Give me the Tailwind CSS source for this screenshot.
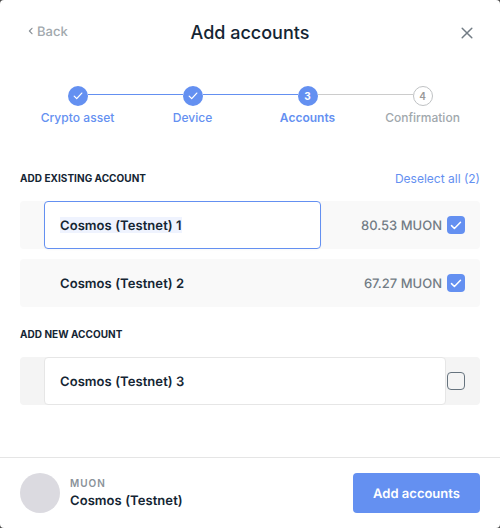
<!DOCTYPE html>
<html lang="en">
<head>
<meta charset="utf-8">
<title>Add accounts</title>
<script src="https://cdn.jsdelivr.net/npm/@tailwindcss/browser@4"></script>
</head>
<body class="bg-[#4a4a4a] font-['Inter',sans-serif] text-[#142533]">
<main class="flex h-[528px] w-[500px] flex-col overflow-hidden rounded-[4px] bg-white">
  <header class="grid h-[66px] grid-cols-[100px_1fr_100px] items-center">
    <button class="ml-[28px] flex items-center gap-[4px] text-[13px] leading-[16px] font-medium text-[#a1a8ad] -mt-[2px] [text-rendering:geometricPrecision]">
      <svg class="-mt-[2px] h-[8px] w-[5px]" viewBox="0 0 5 8" fill="none" stroke="#8a9299" stroke-width="1.2" stroke-linecap="round" stroke-linejoin="round"><path d="M4 1.3 1.4 4 4 6.7"/></svg>
      <span>Back</span>
    </button>
    <h1 class="text-center text-[18px] leading-[22px] font-medium">Add accounts</h1>
    <button class="mr-[27px] justify-self-end" aria-label="Close">
      <svg class="h-[12px] w-[12px]" viewBox="0 0 12 12" stroke="#727c85" stroke-width="1.5" stroke-linecap="round"><path d="M1.2 1.2 10.8 10.8M10.8 1.2 1.2 10.8"/></svg>
    </button>
  </header>

  <nav class="mx-[20px] mt-[20px] grid grid-cols-4 text-[12px] leading-[15px] font-medium text-[#6490f1]">
    <div class="flex flex-col items-center gap-[4px]">
      <div class="flex w-full"><i class="mt-[9px] h-px flex-1"></i><span class="flex size-[20px] items-center justify-center rounded-full bg-[#6490f1]"><svg class="-mt-px h-[8px] w-[10px]" viewBox="0 0 10 8" fill="none" stroke="white" stroke-width="1.3" stroke-linecap="round" stroke-linejoin="round"><path d="M1.2 4.1 3.7 6.6 8.8 1.1"/></svg></span><i class="mt-[8px] h-px flex-1 bg-[#6490f1]"></i></div>
      <span class="tracking-[0.04px]">Crypto asset</span>
    </div>
    <div class="flex flex-col items-center gap-[4px]">
      <div class="flex w-full"><i class="mt-[8px] h-px flex-1 bg-[#6490f1]"></i><span class="flex size-[20px] items-center justify-center rounded-full bg-[#6490f1]"><svg class="-mt-px h-[8px] w-[10px]" viewBox="0 0 10 8" fill="none" stroke="white" stroke-width="1.3" stroke-linecap="round" stroke-linejoin="round"><path d="M1.2 4.1 3.7 6.6 8.8 1.1"/></svg></span><i class="mt-[8px] h-px flex-1 bg-[#6490f1]"></i></div>
      <span>Device</span>
    </div>
    <div class="flex flex-col items-center gap-[4px]">
      <div class="flex w-full"><i class="mt-[8px] h-px flex-1 bg-[#6490f1]"></i><span class="flex size-[20px] items-center justify-center rounded-full bg-[#6490f1] text-[10px] font-bold text-white">3</span><i class="mt-[8px] h-px flex-1 bg-[#cccccc]"></i></div>
      <span class="font-semibold">Accounts</span>
    </div>
    <div class="flex flex-col items-center gap-[4px] text-[#a1a8ad]">
      <div class="flex w-full"><i class="mt-[8px] h-px flex-1 bg-[#cccccc]"></i><span class="flex size-[20px] items-center justify-center rounded-full border border-[#bfc2c4] text-[10px] font-semibold text-[#999999]">4</span><i class="flex-1"></i></div>
      <span>Confirmation</span>
    </div>
  </nav>

  <section class="mx-[20px] mt-[46px]">
    <div class="flex h-[15px] items-start justify-between">
      <h2 class="text-[10px] leading-[14px] font-bold tracking-[0.04px]">ADD EXISTING ACCOUNT</h2>
      <button class="text-[12px] leading-[15px] text-[#6490f1]">Deselect all (2)</button>
    </div>
    <div class="mt-[15px] flex h-[48px] items-center rounded-[4px] bg-[#f9f9f9] pr-[15px] pl-[24px] text-[13px] leading-[16px] [text-rendering:geometricPrecision]">
      <div class="flex h-[48px] w-[277px] items-center rounded-[4px] border border-[#6490f1] bg-white pl-[15px] font-semibold shadow-[0_1px_2px_rgba(0,0,0,0.03)]"><span class="h-[16px] bg-[#eff3fe] leading-[18px] tracking-[0.07px]">Cosmos (Testnet) 1</span></div>
      <span class="ml-auto pt-[2px] font-medium text-[#727c85]">80.53 MUON</span>
      <span class="ml-[5px] flex size-[18px] items-center justify-center rounded-[4px] bg-[#6490f1]"><svg class="h-[9px] w-[12px]" viewBox="0 0 12 9" fill="none" stroke="white" stroke-width="1.5" stroke-linecap="round" stroke-linejoin="round"><path d="M1.5 4.6 4.4 7.5 10.5 1.2"/></svg></span>
    </div>
    <div class="mt-[10px] flex h-[48px] items-center rounded-[4px] bg-[#f9f9f9] pr-[15px] pl-[40px] text-[13px] leading-[16px] [text-rendering:geometricPrecision]">
      <span class="pt-[2px] font-semibold tracking-[0.07px]">Cosmos (Testnet) 2</span>
      <span class="ml-auto pt-[2px] font-medium text-[#727c85]">67.27 MUON</span>
      <span class="ml-[5px] flex size-[18px] items-center justify-center rounded-[4px] bg-[#6490f1]"><svg class="h-[9px] w-[12px]" viewBox="0 0 12 9" fill="none" stroke="white" stroke-width="1.5" stroke-linecap="round" stroke-linejoin="round"><path d="M1.5 4.6 4.4 7.5 10.5 1.2"/></svg></span>
    </div>
  </section>

  <section class="mx-[20px] mt-[20px]">
    <h2 class="text-[10px] leading-[14px] font-bold tracking-[0.04px]">ADD NEW ACCOUNT</h2>
    <div class="mt-[16px] flex h-[48px] items-center rounded-[4px] bg-[#f4f4f4] pl-[24px] text-[13px] leading-[16px] [text-rendering:geometricPrecision]">
      <div class="flex h-[48px] w-[402px] items-center rounded-[4px] border border-[#e6e6e6] bg-white pt-[2px] pl-[15px] font-semibold tracking-[0.07px]">Cosmos (Testnet) 3</div>
      <span class="ml-[1px] size-[18px] rounded-[4px] border border-[#66737e]"></span>
    </div>
  </section>

  <footer class="mt-auto flex h-[71px] items-center border-t border-[#e5e5e5] px-[20px]">
    <span class="size-[40px] rounded-full bg-[#dbdae0]"></span>
    <div class="ml-[10px]">
      <p class="text-[10px] leading-[13px] font-semibold tracking-[1px] text-[#8a9299]">MUON</p>
      <p class="mt-[3px] text-[13px] leading-[16px] font-semibold tracking-[0.07px] [text-rendering:geometricPrecision]">Cosmos (Testnet)</p>
    </div>
    <button class="ml-auto h-[40px] w-[127px] rounded-[4px] bg-[#6490f1] pt-[3px] text-[13px] font-semibold text-white [text-rendering:geometricPrecision]">Add accounts</button>
  </footer>
</main>
</body>
</html>
